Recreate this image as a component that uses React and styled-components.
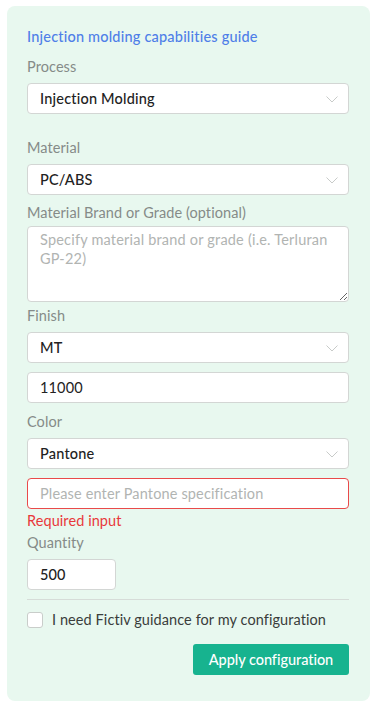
import React from "react";
import styled, { createGlobalStyle } from "styled-components";

const Global = createGlobalStyle`
  html, body { margin: 0; padding: 0; background: #ffffff; }
  body { font-family: Lato, "Noto Sans", sans-serif; -webkit-font-smoothing: antialiased; letter-spacing: 0.08px; }
  * { box-sizing: border-box; }
`;

const Page = styled.div`
  padding: 6px 8px 6px 7px;
`;

const Panel = styled.div`
  background: #e8f8ef;
  border-radius: 8px;
  padding: 21px 21px 26px 20px;
  display: flex;
  flex-direction: column;
`;

const Title = styled.a`
  font-size: 14.5px;
  line-height: 20px;
  letter-spacing: 0.2px;
  color: #4f7fe8;
  font-weight: 500;
  text-decoration: none;
  cursor: pointer;
`;

const Label = styled.label`
  display: block;
  font-size: 14.5px;
  line-height: 20px;
  color: #858b88;
  margin-top: ${(p) => p.$top}px;
  margin-bottom: ${(p) => p.$gap ?? 6}px;
`;

const SelectBox = styled.div`
  position: relative;
  height: 31px;
  background: #ffffff;
  border: 1px solid #d3d6d4;
  border-radius: 4px;
  display: flex;
  align-items: center;
  padding: 0 12px;
  font-size: 14.5px;
  letter-spacing: 0.2px;
  color: #222;
  font-weight: 500;
  margin-top: ${(p) => p.$top ?? 0}px;
`;

const Chevron = styled.svg`
  position: absolute;
  right: 10px;
  top: 12px;
`;

const TextInput = styled.input`
  display: block;
  width: ${(p) => p.$width || "100%"};
  height: 31px;
  background: #ffffff;
  border: 1px solid ${(p) => (p.$error ? "#e94a4a" : "#d3d6d4")};
  border-radius: 4px;
  padding: 0 12px;
  font-family: inherit;
  font-size: 14.5px;
  letter-spacing: 0.15px;
  color: #222;
  font-weight: ${(p) => (p.$bold ? 500 : 400)};
  margin-top: ${(p) => p.$top ?? 0}px;
  outline: none;
  &::placeholder { color: #b1b4b2; font-weight: 400; }
`;

const TextArea = styled.textarea`
  display: block;
  width: 100%;
  height: 76px;
  background: #ffffff;
  border: 1px solid #d3d6d4;
  border-radius: 4px;
  padding: 3px 12px;
  font-family: inherit;
  font-size: 14.5px;
  letter-spacing: 0.2px;
  line-height: 19px;
  color: #222;
  outline: none;
  &::placeholder { color: #b1b4b2; }
`;

const ErrorText = styled.div`
  font-size: 14.5px;
  line-height: 18px;
  color: #e8393b;
  margin-top: 3px;
`;

const Divider = styled.hr`
  border: 0;
  border-top: 1px solid #d6dcd8;
  margin: 9px 0 0;
`;

const CheckRow = styled.label`
  display: flex;
  align-items: center;
  gap: 9px;
  margin-top: 11px;
  font-size: 14.5px;
  line-height: 18px;
  color: #3a3d3b;
`;

const Box = styled.span`
  width: 16px;
  height: 16px;
  background: #ffffff;
  border: 1px solid #c9cdca;
  border-radius: 3px;
  flex: none;
`;

const Actions = styled.div`
  display: flex;
  justify-content: flex-end;
  margin-top: 15px;
`;

const Button = styled.button`
  width: 156px;
  height: 31px;
  border: 0;
  border-radius: 3px;
  background: #17b38f;
  color: #ffffff;
  font-family: inherit;
  font-size: 14.5px;
  letter-spacing: -0.05px;
  font-weight: 500;
  cursor: pointer;
`;

const Select = ({ value, top }) => (
  <SelectBox $top={top}>
    {value}
    <Chevron width="12" height="7" viewBox="0 0 12 7">
      <path d="M0.5 0.5 L6 6 L11.5 0.5" fill="none" stroke="#c8cbc9" strokeWidth="1" />
    </Chevron>
  </SelectBox>
);

export default function App() {
  return (
    <>
      <Global />
      <Page>
        <Panel>
          <Title>Injection molding capabilities guide</Title>
          <Label $top={10}>Process</Label>
          <Select value="Injection Molding" />
          <Label $top={24}>Material</Label>
          <Select value="PC/ABS" />
          <Label $top={8} $gap={3}>Material Brand or Grade (optional)</Label>
          <TextArea placeholder="Specify material brand or grade (i.e. Terluran GP-22)" />
          <Label $top={4}>Finish</Label>
          <Select value="MT" />
          <TextInput $top={9} defaultValue="11000" />
          <Label $top={9}>Color</Label>
          <Select value="Pantone" />
          <TextInput $top={9} $error placeholder="Please enter Pantone specification" />
          <ErrorText>Required input</ErrorText>
          <Label $top={3} $gap={6}>Quantity</Label>
          <TextInput $width="89px" $bold defaultValue="500" />
          <Divider />
          <CheckRow>
            <Box />
            I need Fictiv guidance for my configuration
          </CheckRow>
          <Actions>
            <Button>Apply configuration</Button>
          </Actions>
        </Panel>
      </Page>
    </>
  );
}
